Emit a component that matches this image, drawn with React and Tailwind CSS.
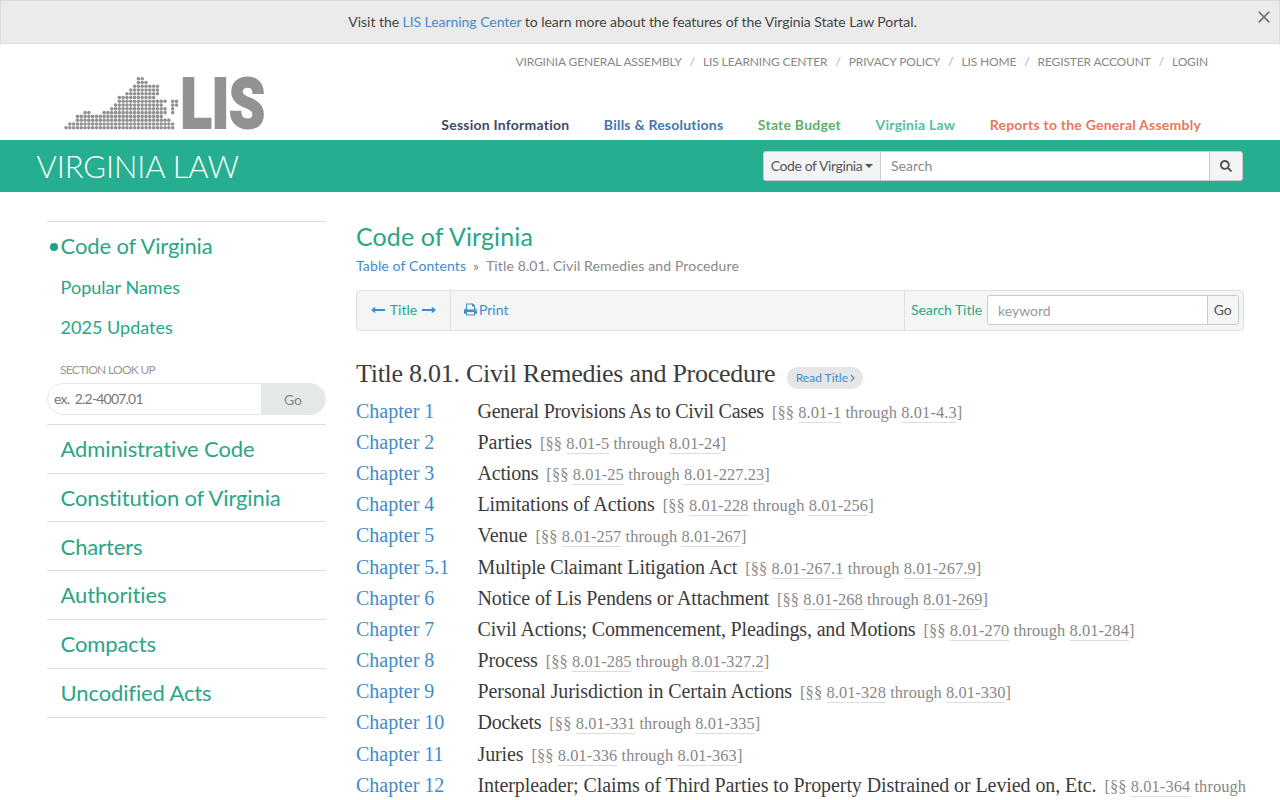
import { useState } from "react";
import { FaSearch } from "react-icons/fa";

// Dot columns [from, to] filled on each row of the state map
const mapRows = [
  [[19, 20]],
  [[19, 21]],
  [[18, 24]],
  [[17, 24]],
  [[16, 24]],
  [[14, 23]],
  [[14, 26], [28, 29]],
  [[13, 25], [28, 29]],
  [[12, 26], [28, 28]],
  [[5, 6], [10, 26], [28, 28]],
  [[3, 25]],
  [[3, 27]],
  [[1, 28]],
  [[0, 28]],
];

const topLinks = [
  "Virginia General Assembly",
  "LIS Learning Center",
  "Privacy Policy",
  "LIS Home",
  "Register Account",
  "Login",
];

const sections = [
  "Administrative Code",
  "Constitution of Virginia",
  "Charters",
  "Authorities",
  "Compacts",
  "Uncodified Acts",
];

const chapters = [
  { num: "1", title: "General Provisions As to Civil Cases", from: "8.01-1", to: "8.01-4.3", tracking: "tracking-[-0.27px]" },
  { num: "2", title: "Parties", from: "8.01-5", to: "8.01-24", tracking: "tracking-[0px]" },
  { num: "3", title: "Actions", from: "8.01-25", to: "8.01-227.23", tracking: "tracking-[-0.2px]" },
  { num: "4", title: "Limitations of Actions", from: "8.01-228", to: "8.01-256" },
  { num: "5", title: "Venue", from: "8.01-257", to: "8.01-267", tracking: "tracking-[0px]" },
  { num: "5.1", title: "Multiple Claimant Litigation Act", from: "8.01-267.1", to: "8.01-267.9" },
  { num: "6", title: "Notice of Lis Pendens or Attachment", from: "8.01-268", to: "8.01-269" },
  { num: "7", title: "Civil Actions; Commencement, Pleadings, and Motions", from: "8.01-270", to: "8.01-284", tracking: "tracking-[-0.16px]" },
  { num: "8", title: "Process", from: "8.01-285", to: "8.01-327.2" },
  { num: "9", title: "Personal Jurisdiction in Certain Actions", from: "8.01-328", to: "8.01-330", tracking: "tracking-[-0.08px]" },
  { num: "10", title: "Dockets", from: "8.01-331", to: "8.01-335", tracking: "tracking-[-0.25px]" },
  { num: "11", title: "Juries", from: "8.01-336", to: "8.01-363" },
  { num: "12", title: "Interpleader; Claims of Third Parties to Property Distrained or Levied on, Etc.", from: "8.01-364", tracking: "tracking-[-0.085px]" },
];

function Logo() {
  return (
    <svg width="204" height="58" viewBox="0 0 204 58" className="block overflow-visible" fill="#929292">
      {mapRows.map((runs, row) =>
        runs.map(([from, to]) =>
          Array.from({ length: to - from + 1 }, (_, i) => (
            <circle
              key={`${row}-${from + i}`}
              cx={4 + (from + i) * 3.81}
              cy={4.7 + row * 3.77}
              r="1.8"
            />
          ))
        )
      )}
      <text
        x="118.5"
        y="54.3"
        fontFamily="Roboto"
        fontWeight="900"
        fontSize="71"
        stroke="#929292"
        strokeWidth="2"
        textLength="84.5"
        lengthAdjust="spacingAndGlyphs"
      >
        LIS
      </text>
    </svg>
  );
}

function PrintIcon() {
  return (
    <svg width="13" height="13" viewBox="0 0 13 13" fill="#428bca" fillRule="evenodd">
      <path d="M2 0.5H9L11 2.5V5.5A2 2 0 0 1 13 7.5V10.8H11V12.5H2V10.8H0V7.5A2 2 0 0 1 2 5.5ZM3 1.5V6.5H10V3.5H8V1.5ZM3 9V11.5H10V9ZM11 7V8H12V7Z" />
    </svg>
  );
}

function Arrow({ flip }) {
  return (
    <svg width="14" height="8" viewBox="0 0 14 8" className={flip ? "rotate-180" : ""} fill="#428bca">
      <path d="M0 3.1H9.8V0.8L14 4L9.8 7.2V4.9H0Z" />
    </svg>
  );
}

function ChapterRow({ chapter }) {
  return (
    <div className="flex h-[31.17px] items-baseline whitespace-nowrap">
      <a className="w-[121.5px] shrink-0 text-[#428bca]">Chapter {chapter.num}</a>
      <span className={chapter.tracking || "tracking-[-0.13px]"}>{chapter.title}</span>
      <span className="ml-2 text-[16.4px] tracking-[0.1px] text-[#888]">
        [§§{" "}
        <a className="underline decoration-[#ddd] decoration-1 underline-offset-[4px]">
          {chapter.from}
        </a>{" "}
        through
        {chapter.to && (
          <>
            {" "}
            <a className="underline decoration-[#ddd] decoration-1 underline-offset-[4px]">
              {chapter.to}
            </a>
            ]
          </>
        )}
      </span>
    </div>
  );
}

function App() {
  const [query, setQuery] = useState("");
  const [keyword, setKeyword] = useState("");
  const [section, setSection] = useState("");

  return (
    <div className="h-[800px] w-[1280px] overflow-hidden bg-white font-['Lato',sans-serif] text-sm text-[#444]">
      {/* Notice */}
      <div className="relative flex h-11 items-center justify-center border border-[#dcdcdc] bg-[#ebebeb] pr-[15px]">
        <p className="tracking-[-0.05px]">
          Visit the <a className="text-[#428bca]">LIS Learning Center</a> to learn more about the
          features of the Virginia State Law Portal.
        </p>
        <button className="absolute top-[10px] right-[9px]">
          <svg width="12" height="12" viewBox="0 0 12 12" stroke="#777" strokeWidth="1.8">
            <path d="M0.7 0.7L11.3 11.3M11.3 0.7L0.7 11.3" />
          </svg>
        </button>
      </div>

      {/* Header */}
      <header className="flex h-24 justify-between pr-[72px] pl-[62px]">
        <div className="pt-[30px]">
          <Logo />
        </div>
        <div className="flex flex-col items-end justify-between pt-[10px] pb-[5px]">
          <nav className="flex text-[12px] leading-4 tracking-[-0.14px] text-[#888] uppercase">
            {topLinks.map((link, i) => (
              <span key={link}>
                {i > 0 && <span className="px-2 text-[#aaa]">/</span>}
                <a>{link}</a>
              </span>
            ))}
          </nav>
          <nav className="flex gap-[34.5px] pr-[7px] leading-5 font-bold tracking-[0.23px]">
            <a className="text-[#3f4a5f]">Session Information</a>
            <a className="text-[#4475ab]">Bills &amp; Resolutions</a>
            <a className="text-[#60ae6c]">State Budget</a>
            <a className="text-[#56bda2]">Virginia Law</a>
            <a className="text-[#e6785f]">Reports to the General Assembly</a>
          </nav>
        </div>
      </header>

      {/* Title bar */}
      <div className="flex h-[52px] items-center justify-between bg-[#26ae90] px-[37px]">
        <h1 className="-ml-[0.5px] text-[31px] font-light tracking-[-0.1px] text-white uppercase">Virginia Law</h1>
        <div className="flex h-[30px] w-[480px] overflow-hidden rounded-[3px] border border-[#ccc] bg-white">
          <button className="flex w-[117px] shrink-0 items-center justify-center gap-[3px] border-r border-[#ccc] bg-[#f3f5f5] tracking-[-0.4px] text-[#555]">
            Code of Virginia
            <svg width="8" height="4" viewBox="0 0 8 4" fill="#555">
              <path d="M0 0H8L4 4Z" />
            </svg>
          </button>
          <input
            className="min-w-0 flex-1 px-[10px] outline-none placeholder:text-[#888]"
            value={query}
            onChange={(e) => setQuery(e.target.value)}
            placeholder="Search"
          />
          <button className="flex w-[33px] items-center justify-center border-l border-[#ccc] bg-[#f3f5f5] text-[#555]">
            <FaSearch size={12} />
          </button>
        </div>
      </div>

      <div className="flex pt-[29px] pl-[47px]">
        {/* Sidebar */}
        <aside className="w-[279px] shrink-0 text-[22px] tracking-[-0.13px] text-[#2ba587]">
          <div className="h-[202.75px] border-t border-[#ddd]">
            <div className="flex h-[47px] items-center">
              <span className="mt-[3px] mr-[2.6px] ml-[3px] h-2 w-2 rounded-full bg-[#1ba184]" />
              <a>Code of Virginia</a>
            </div>
            <div className="flex flex-col pl-[13.6px] text-lg leading-10 tracking-[0.02px]">
              <a className="-mt-[2px]">Popular Names</a>
              <a>2025 Updates</a>
            </div>
            <label className="mt-[14px] block pl-[13px] text-[12px] leading-[18px] tracking-[-0.7px] text-[#999]">
              SECTION LOOK UP
            </label>
            <div className="mt-1 flex h-8 overflow-hidden rounded-full border border-[#e4e8e8] text-sm tracking-normal">
              <input
                className="min-w-0 flex-1 px-[6px] tracking-[-0.8px] outline-none placeholder:text-[#777]"
                value={section}
                onChange={(e) => setSection(e.target.value)}
                placeholder="ex.  2.2-4007.01"
              />
              <button className="w-16 bg-[#e4e8e8] pt-[2px] text-[#888]">Go</button>
            </div>
          </div>
          <div className="border-b border-[#ddd]">
            {sections.map((name) => (
              <a
                key={name}
                className="flex h-[48.8px] items-center border-t border-[#ddd] pl-[13.6px]"
              >
                {name}
              </a>
            ))}
          </div>
        </aside>

        {/* Content */}
        <main className="ml-[30px] w-[888px]">
          <h2 className="-mt-px text-[25px] leading-8 tracking-[0.12px] text-[#2ba587]">Code of Virginia</h2>
          <div className="mt-1 flex leading-5 tracking-[0.14px] text-[#888]">
            <a className="text-[#428bca]">Table of Contents</a>
            <span className="px-[6.8px]">»</span>
            <span>Title 8.01. Civil Remedies and Procedure</span>
          </div>

          <div className="mt-[14px] flex h-[41px] items-stretch rounded border border-[#dde1e1] bg-[#f4f6f6]">
            <div className="flex w-[94px] items-center justify-center gap-[5px] border-r border-[#dde1e1] pb-[2px] text-[#2ba587]">
              <Arrow flip />
              Title
              <Arrow />
            </div>
            <a className="flex items-center gap-[2px] pb-[2px] pl-[13px] text-[#428bca]">
              <PrintIcon />
              Print
            </a>
            <div className="ml-auto flex items-center border-l border-[#dde1e1] pr-[4px] pb-px pl-[6px] text-[#2ba587]">
              <span className="tracking-[-0.05px]">Search Title</span>
              <div className="ml-[5px] flex h-[30px] overflow-hidden rounded-[3px] border border-[#c8cccc] bg-white">
                <input
                  className="w-[218.5px] px-[10px] pt-[2px] outline-none placeholder:text-[#999]"
                  value={keyword}
                  onChange={(e) => setKeyword(e.target.value)}
                  placeholder="keyword"
                />
                <button className="w-[31.5px] border-l border-[#c8cccc] bg-[#f4f6f6] text-[#555]">Go</button>
              </div>
            </div>
          </div>

          <div className="font-['Liberation_Serif',serif] text-[#3c3c3c]">
            <div className="mt-[25px] flex h-9 items-center">
              <h3 className="text-[26px] tracking-[-0.27px]">Title 8.01. Civil Remedies and Procedure</h3>
              <a className="mt-2 ml-3 flex h-[22px] w-[76px] items-center justify-center gap-[2px] rounded-full bg-[#e6e6e6] font-['Lato',sans-serif] text-[12px] text-[#428bca]">
                Read Title
                <svg width="5" height="8" viewBox="0 0 5 8" fill="none" stroke="#428bca" strokeWidth="1.1">
                  <path d="M1 1L4 4L1 7" />
                </svg>
              </a>
            </div>
            <div className="mt-[3.8px] text-[20px] leading-[31px]">
              {chapters.map((chapter) => (
                <ChapterRow key={chapter.num} chapter={chapter} />
              ))}
            </div>
          </div>
        </main>
      </div>
    </div>
  );
}

export default App;
